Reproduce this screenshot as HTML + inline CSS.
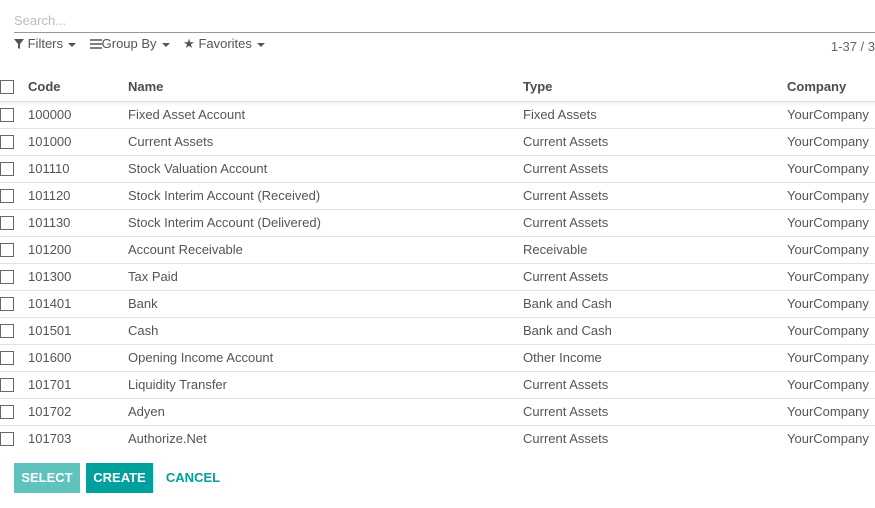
<!DOCTYPE html>
<html><head><style>
body{margin:0;width:875px;height:508px;overflow:hidden;background:#fff;font-family:"Liberation Sans",sans-serif;font-size:13px;color:#555;position:relative}
.abs{position:absolute}
.row{position:absolute;left:0;width:875px;height:27px;border-top:1px solid #e2e2e2;box-sizing:border-box}
.row span{position:absolute;top:5px;white-space:nowrap}
.cb{position:absolute;left:0;top:6px;width:14px;height:14px;border:1px solid #666;box-sizing:border-box;background:#fff}
.c1{left:28px}.c2{left:128px}.c3{left:523px}.c4{left:787px}
.hd span{font-weight:bold;color:#4c4c4c}
.btn{position:absolute;top:463px;height:30px;line-height:30px;color:#fff;font-weight:bold;font-size:13px;text-align:center}
.caret{display:inline-block;border-left:4px solid transparent;border-right:4px solid transparent;border-top:4px solid #555;vertical-align:middle;margin-left:5px}
</style></head><body>
<div class="abs" style="left:14px;top:13px;color:#bbb">Search...</div>
<div class="abs" style="left:14px;top:32px;width:861px;height:1px;background:#999"></div>
<div class="abs" style="left:14px;top:36px;color:#555;white-space:nowrap">
<svg width="10" height="10" viewBox="0 0 10 10" style="vertical-align:-1px"><path d="M0 0H10L6 5V10L4 9V5Z" fill="#555"/></svg> Filters<span class="caret"></span>
<span style="margin-left:10px"><svg width="12" height="10" viewBox="0 0 12 10" style="vertical-align:-1px"><path d="M0 1H12M0 5H12M0 9H12" stroke="#555" stroke-width="1.6"/></svg>Group By<span class="caret"></span></span>
<span style="margin-left:10px">★ Favorites<span class="caret"></span></span>
</div>
<div class="abs" style="right:0;top:39px;color:#666">1-37 / 3</div>
<div class="row hd" style="top:74px;border-top:none"><div class="cb" style="top:6px"></div><span class="c1">Code</span><span class="c2">Name</span><span class="c3">Type</span><span class="c4">Company</span></div>
<div class="row" style="top:101px;border-top:1px solid #ddd;background:linear-gradient(#f3f3f3,#fff 4px)"><div class="cb"></div><span class="c1">100000</span><span class="c2">Fixed Asset Account</span><span class="c3">Fixed Assets</span><span class="c4">YourCompany</span></div>
<div class="row" style="top:128px"><div class="cb"></div><span class="c1">101000</span><span class="c2">Current Assets</span><span class="c3">Current Assets</span><span class="c4">YourCompany</span></div>
<div class="row" style="top:155px"><div class="cb"></div><span class="c1">101110</span><span class="c2">Stock Valuation Account</span><span class="c3">Current Assets</span><span class="c4">YourCompany</span></div>
<div class="row" style="top:182px"><div class="cb"></div><span class="c1">101120</span><span class="c2">Stock Interim Account (Received)</span><span class="c3">Current Assets</span><span class="c4">YourCompany</span></div>
<div class="row" style="top:209px"><div class="cb"></div><span class="c1">101130</span><span class="c2">Stock Interim Account (Delivered)</span><span class="c3">Current Assets</span><span class="c4">YourCompany</span></div>
<div class="row" style="top:236px"><div class="cb"></div><span class="c1">101200</span><span class="c2">Account Receivable</span><span class="c3">Receivable</span><span class="c4">YourCompany</span></div>
<div class="row" style="top:263px"><div class="cb"></div><span class="c1">101300</span><span class="c2">Tax Paid</span><span class="c3">Current Assets</span><span class="c4">YourCompany</span></div>
<div class="row" style="top:290px"><div class="cb"></div><span class="c1">101401</span><span class="c2">Bank</span><span class="c3">Bank and Cash</span><span class="c4">YourCompany</span></div>
<div class="row" style="top:317px"><div class="cb"></div><span class="c1">101501</span><span class="c2">Cash</span><span class="c3">Bank and Cash</span><span class="c4">YourCompany</span></div>
<div class="row" style="top:344px"><div class="cb"></div><span class="c1">101600</span><span class="c2">Opening Income Account</span><span class="c3">Other Income</span><span class="c4">YourCompany</span></div>
<div class="row" style="top:371px"><div class="cb"></div><span class="c1">101701</span><span class="c2">Liquidity Transfer</span><span class="c3">Current Assets</span><span class="c4">YourCompany</span></div>
<div class="row" style="top:398px"><div class="cb"></div><span class="c1">101702</span><span class="c2">Adyen</span><span class="c3">Current Assets</span><span class="c4">YourCompany</span></div>
<div class="row" style="top:425px;height:22px;overflow:hidden"><div class="cb"></div><span class="c1">101703</span><span class="c2">Authorize.Net</span><span class="c3">Current Assets</span><span class="c4">YourCompany</span></div>
<div class="btn" style="left:14px;width:66px;background:#5fc2bc">SELECT</div>
<div class="btn" style="left:86px;width:67px;background:#00a09d">CREATE</div>
<div class="btn" style="left:160px;width:66px;color:#00a09d">CANCEL</div>
</body></html>
